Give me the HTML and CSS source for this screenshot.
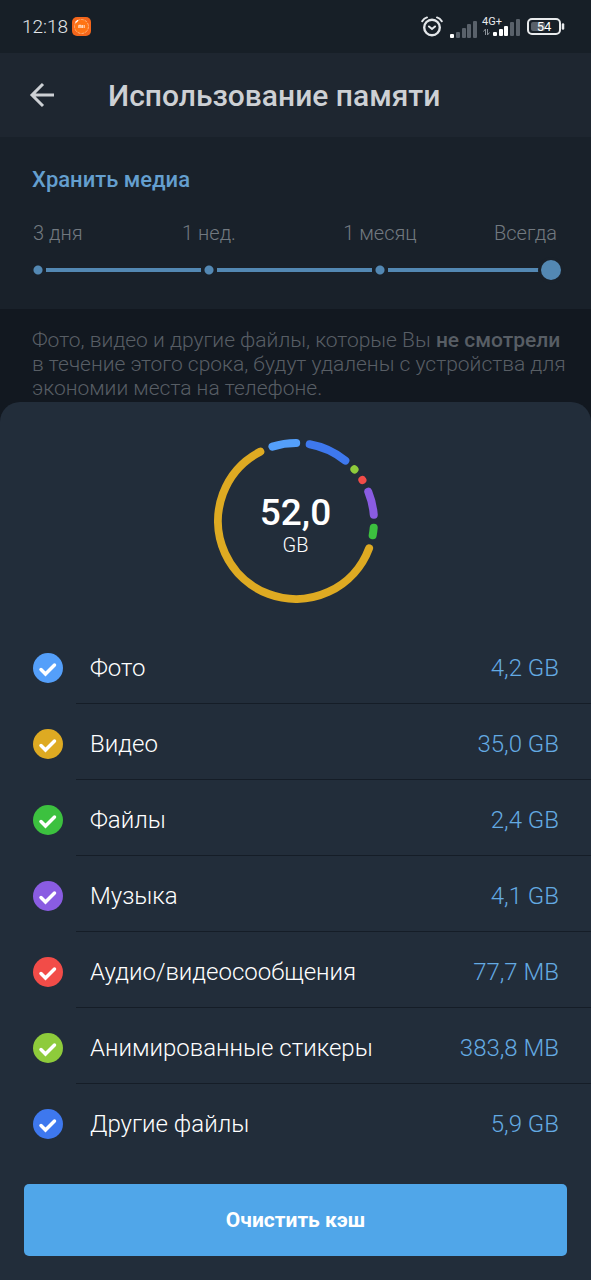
FILE: index.html
```html
<!DOCTYPE html>
<html lang="ru">
<head>
<meta charset="utf-8">
<meta name="viewport" content="width=device-width, initial-scale=1">
<title>Использование памяти</title>
<link rel="stylesheet" href="styles.css">
</head>
<body>
<div class="statusbar">
  <span class="clock">12:18</span>
  <svg class="app-icon" width="19" height="19" viewBox="0 0 19 19" aria-hidden="true">
    <rect width="19" height="19" rx="5" fill="#f4661b"/>
    <circle cx="9.500" cy="9.500" r="7" fill="#ff7414" stroke="#ffb277" stroke-width="1" stroke-dasharray="3 1"/>
    <path d="M3.500 5.500L6 3.300" stroke="#fff" stroke-width="1.300"/>
    <path d="M6.800 11V8.300h2.400V11M8 9v2M10.600 8v3M12.200 8v3" fill="none" stroke="#fff" stroke-width=".8"/>
  </svg>
  <div class="indicators">
    <svg width="22" height="22" viewBox="0 0 22 22" fill="none" stroke="#e3e6e9" stroke-width="2" stroke-linecap="round" aria-hidden="true">
      <circle cx="11" cy="11.500" r="7.800" stroke-width="2.400"/>
      <path d="M1.200 5.200Q3 2.200 6 1.400M20.800 5.200Q19 2.200 16 1.400M8 10.500l3 2.500L14 10.500"/>
    </svg>
    <svg class="signal" width="27" height="18" viewBox="0 0 27 18" aria-hidden="true">
      <g fill="#59616a"><rect x="6" y="12" width="4" height="6" rx="1"/><rect x="12" y="8" width="4" height="10" rx="1"/><rect x="17" y="4" width="4" height="14" rx="1"/><rect x="23" y="1" width="4" height="17" rx="1"/></g>
      <rect y="14" width="4" height="4" rx="1" fill="#fff"/>
    </svg>
    <div class="network">
      <span class="network-type">4G+</span>
      <svg width="38" height="18" viewBox="0 0 38 18" aria-hidden="true">
        <path d="M3.500 17v-6L1.500 13.500M5.500 11v6l2-2.500" fill="none" stroke="#8b9299"/>
        <g fill="#fff"><rect x="11" y="14" width="4" height="4" rx="1"/><rect x="17" y="11" width="4" height="7" rx="1"/><rect x="22" y="8" width="4" height="10" rx="1"/></g>
        <g fill="#59616a"><rect x="28" y="4" width="4" height="14" rx="1"/><rect x="34" y="1" width="4" height="17" rx="1"/></g>
      </svg>
    </div>
    <svg class="battery" width="38" height="17" viewBox="0 0 38 17" aria-label="54%">
      <rect x="4" y="4" width="14" height="9" rx="2" fill="#59616a"/>
      <rect x="1" y="1" width="32" height="15" rx="4" fill="none" stroke="#e8eaec" stroke-width="2"/>
      <path d="M36 6.500v4" stroke="#e8eaec" stroke-width="2.500" stroke-linecap="round"/>
      <text class="battery-text" x="17" y="13">54</text>
    </svg>
  </div>
</div>

<header class="header">
  <button class="back" type="button" aria-label="Назад">
    <svg width="26" height="26" viewBox="0 0 26 26" fill="none" stroke="#cdd0d4" stroke-width="3"><path d="M25 13H3M14 2L3 13l11 11"/></svg>
  </button>
  <h1 class="title">Использование памяти</h1>
</header>

<section class="keep">
  <label class="keep-title" for="keep">Хранить медиа</label>
  <div class="keep-labels"><span>3 дня</span><span>1 нед.</span><span>1 месяц</span><span>Всегда</span></div>
  <input class="keep-slider" id="keep" type="range" min="0" max="3" step="1" value="3">
</section>
<p class="hint">Фото, видео и другие файлы, которые Вы <b>не смотрели</b> в течение этого срока, будут удалены с устройства для экономии места на телефоне.</p>

<main class="sheet">
  <div class="chart">
    <svg class="ring" width="164" height="164" viewBox="0 0 164 164" aria-hidden="true">
      <circle class="arc photo" cx="82" cy="82" r="78" pathLength="360" stroke-dasharray="17.800 360" transform="rotate(-107.600 82 82)"/>
      <circle class="arc other" cx="82" cy="82" r="78" pathLength="360" stroke-dasharray="29.200 360" transform="rotate(-79.900 82 82)"/>
      <circle class="arc stickers" cx="82" cy="82" r="78" pathLength="360" stroke-dasharray=".1 360" transform="rotate(-41.500 82 82)"/>
      <circle class="arc messages" cx="82" cy="82" r="78" pathLength="360" stroke-dasharray=".1 360" transform="rotate(-31.700 82 82)"/>
      <circle class="arc music" cx="82" cy="82" r="78" pathLength="360" stroke-dasharray="17.500 360" transform="rotate(-22.100 82 82)"/>
      <circle class="arc files" cx="82" cy="82" r="78" pathLength="360" stroke-dasharray="5.700 360" transform="rotate(4.900 82 82)"/>
      <circle class="arc video" cx="82" cy="82" r="78" pathLength="360" stroke-dasharray="222.300 360" transform="rotate(20.500 82 82)"/>
    </svg>
    <div class="total"><strong class="total-value">52,0</strong><span class="total-unit">GB</span></div>
  </div>

  <ul class="list">
    <li><label class="row"><input class="check photo" type="checkbox" checked><span class="row-body"><span>Фото</span><span class="size">4,2 GB</span></span></label></li>
    <li><label class="row"><input class="check video" type="checkbox" checked><span class="row-body"><span>Видео</span><span class="size">35,0 GB</span></span></label></li>
    <li><label class="row"><input class="check files" type="checkbox" checked><span class="row-body"><span>Файлы</span><span class="size">2,4 GB</span></span></label></li>
    <li><label class="row"><input class="check music" type="checkbox" checked><span class="row-body"><span>Музыка</span><span class="size">4,1 GB</span></span></label></li>
    <li><label class="row"><input class="check messages" type="checkbox" checked><span class="row-body"><span>Аудио/видеосообщения</span><span class="size">77,7 MB</span></span></label></li>
    <li><label class="row"><input class="check stickers" type="checkbox" checked><span class="row-body"><span>Анимированные стикеры</span><span class="size">383,8 MB</span></span></label></li>
    <li><label class="row"><input class="check other" type="checkbox" checked><span class="row-body"><span>Другие файлы</span><span class="size">5,9 GB</span></span></label></li>
  </ul>
  <button class="clear" type="button">Очистить кэш</button>
</main>
</body>
</html>
```

FILE: styles.css
```css
* { box-sizing: border-box; }

body {
  margin: 0;
  min-height: 100vh;
  display: flex;
  flex-direction: column;
  background: #121820;
  color: #fff;
  font-family: Roboto, "Noto Sans", sans-serif;
  font-weight: 300;
}

/* Category colours shared by the ring and the check marks */
.photo { --c: #549ffa; }
.video { --c: #deaa22; }
.files { --c: #3cc13f; }
.music { --c: #8a5ce2; }
.messages { --c: #f24c48; }
.stickers { --c: #8ecb3b; }
.other { --c: #3e78ee; }

.statusbar {
  display: flex;
  align-items: center;
  height: 53px;
  padding: 0 26px 0 22px;
  background: #171f27;
}
.clock { font-size: 19px; color: #e4e7ea; }
.app-icon { margin-left: 4px; }
.indicators { display: flex; align-items: center; margin-left: auto; }
.signal { margin: 0 5px 0 7px; }
.indicators .signal { align-self: flex-end; }
.network { position: relative; display: flex; margin-right: 7px; }
.network-type {
  position: absolute;
  top: -2px;
  left: 0;
  font-size: 11px;
  line-height: 11px;
  font-weight: 400;
  color: #e8eaec;
}
.battery-text { font-size: 13px; font-weight: 400; fill: #fff; text-anchor: middle; }

.header {
  display: flex;
  align-items: center;
  height: 84px;
  padding: 0 29px;
  background: #1e2630;
}
.back { display: flex; padding: 0; border: 0; background: none; }
.title { margin: 0 0 0 53px; font-size: 30px; font-weight: 500; color: #cdd0d4; }

.keep { height: 172px; padding: 30px 30px 0 28px; background: #19212a; }
.keep-title {
  display: block;
  margin-left: 4px;
  font-size: 22px;
  line-height: 26px;
  font-weight: 500;
  color: #649fcf;
}
/* The middle labels are centred on the slider's stops */
.keep-labels {
  display: grid;
  grid-template-columns: 1fr 2fr 2fr 1fr;
  margin: 27px 10px 0;
  font-size: 20px;
  line-height: 26px;
  color: #727980;
  text-align: center;
  white-space: nowrap;
}
.keep-labels span:first-child { margin-left: -5px; text-align: left; }
.keep-labels span:last-child { margin-right: -6px; text-align: right; }
.keep-slider {
  -webkit-appearance: none;
  appearance: none;
  display: block;
  width: 100%;
  height: 20px;
  margin: 14px 0 0;
  --stop: radial-gradient(circle, #5388b3 4px, #19212a 5px 8px, transparent 8px);
  background:
    var(--stop) 0 0 / 20px 20px no-repeat,
    var(--stop) 33.333% 0 / 20px 20px no-repeat,
    var(--stop) 66.667% 0 / 20px 20px no-repeat,
    linear-gradient(#5388b3, #5388b3) center / calc(100% - 20px) 4px no-repeat;
}
.keep-slider::-webkit-slider-thumb {
  -webkit-appearance: none;
  width: 20px;
  height: 20px;
  border-radius: 50%;
  background: #5388b3;
  box-shadow: 0 0 0 3px #19212a;
}

.hint {
  height: 93px;
  margin: 0;
  padding: 19px 24px 0 32px;
  font-size: 21px;
  line-height: 24px;
  color: #585e65;
}
.hint b { font-weight: 500; }

.sheet {
  flex: 1;
  display: flex;
  flex-direction: column;
  padding: 37px 0 24px;
  border-radius: 20px 20px 0 0;
  background: #222d3a;
}
.chart { display: grid; place-items: center; margin-bottom: 25px; }
.chart > * { grid-area: 1 / 1; }
.arc { fill: none; stroke: var(--c); stroke-width: 8px; stroke-linecap: round; }
.total { display: flex; flex-direction: column; align-items: center; padding-top: 8px; }
.total-value { font-size: 37px; line-height: 40px; font-weight: 500; }
.total-unit { font-size: 20px; line-height: 24px; }

.list { margin: 0; padding: 0; list-style: none; font-size: 24px; }
.row { display: flex; align-items: center; height: 76px; padding-left: 33px; }
.check {
  -webkit-appearance: none;
  appearance: none;
  flex: none;
  width: 30px;
  height: 30px;
  margin: 4px 13px 0 0;
  border-radius: 50%;
  background-color: var(--c);
}
.check:checked {
  background-image: url("data:image/svg+xml,%3Csvg xmlns='http://www.w3.org/2000/svg' viewBox='0 0 30 30'%3E%3Cpath d='M8 16.500l4.500 4.500L21.500 12' fill='none' stroke='white' stroke-width='3.500' stroke-linecap='round'/%3E%3C/svg%3E");
}
.row-body {
  flex: 1;
  display: flex;
  align-items: center;
  justify-content: space-between;
  height: 100%;
  padding: 4px 32px 0 14px;
  border-bottom: 1px solid #151d27;
}
li:last-child .row-body { border-bottom-color: transparent; }
.size { color: #64aae2; }

.clear {
  height: 72px;
  margin: auto 24px 0;
  border: 0;
  border-radius: 5px;
  background: #50a6e9;
  color: #fff;
  font: 700 21px Roboto, "Noto Sans", sans-serif;
}
```
